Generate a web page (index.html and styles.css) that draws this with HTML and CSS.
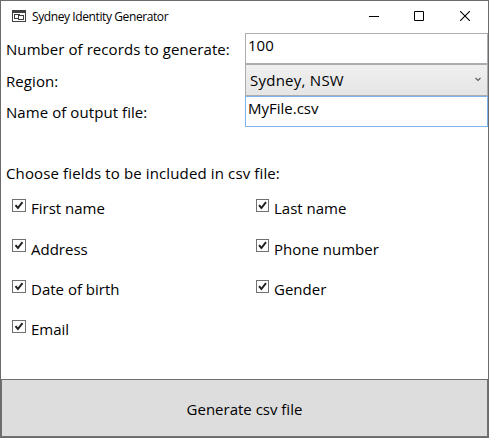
FILE: index.html
```
<!DOCTYPE html>
<html lang="en">
<head>
<meta charset="utf-8">
<title>Sydney Identity Generator</title>
<link rel="stylesheet" href="styles.css">
</head>
<body>
<div class="window">
  <header class="titlebar">
    <svg class="app-icon" width="14" height="12" viewBox="0 0 14 12" shape-rendering="crispEdges">
      <path fill="#404040" d="M0 0h14v12H0z"/>
      <path fill="#fff" d="M1 3h12v8H1z"/>
      <path fill="none" stroke="#404040" d="M2.5 4.500h5v4h-5z"/>
      <path fill="#fff" stroke="#404040" d="M6.500 5.500h5v4h-5z"/>
    </svg>
    <h1 class="title">Sydney Identity Generator</h1>
    <div class="controls">
      <svg class="minimize" width="10" height="10" viewBox="0 0 10 10"><path stroke="#000" d="M0 5.500h10"/></svg>
      <svg width="10" height="10" viewBox="0 0 10 10"><path fill="none" stroke="#000" d="M.5.5h9v9h-9z"/></svg>
      <svg width="10" height="10" viewBox="0 0 10 10"><path stroke="#000" stroke-width="1.100" d="M0 0l10 10M10 0L0 10"/></svg>
    </div>
  </header>
  <main class="form">
    <div class="settings">
      <label class="label">Number of records to generate:</label>
      <div class="field">100</div>
      <label class="label region">Region:</label>
      <div class="field select"><span>Sydney, NSW</span>
        <svg width="6" height="5" viewBox="0 0 6 5"><path fill="none" stroke="#606060" stroke-width="1.200" d="M.5 1L3 3.500 5.500 1"/></svg>
      </div>
      <label class="label">Name of output file:</label>
      <div class="field active">MyFile.csv</div>
    </div>
    <p class="prompt">Choose fields to be included in csv file:</p>
    <div class="choices">
      <div class="choice"><span class="box"><svg viewBox="0 0 11 11"><path d="M2 5.200L4.400 8 9 2.200"/></svg></span>First name</div>
      <div class="choice"><span class="box"><svg viewBox="0 0 11 11"><path d="M2 5.200L4.400 8 9 2.200"/></svg></span>Last name</div>
      <div class="choice"><span class="box"><svg viewBox="0 0 11 11"><path d="M2 5.200L4.400 8 9 2.200"/></svg></span><span class="lower">Address</span></div>
      <div class="choice"><span class="box"><svg viewBox="0 0 11 11"><path d="M2 5.200L4.400 8 9 2.200"/></svg></span><span class="lower">Phone number</span></div>
      <div class="choice"><span class="box"><svg viewBox="0 0 11 11"><path d="M2 5.200L4.400 8 9 2.200"/></svg></span>Date of birth</div>
      <div class="choice"><span class="box"><svg viewBox="0 0 11 11"><path d="M2 5.200L4.400 8 9 2.200"/></svg></span>Gender</div>
      <div class="choice"><span class="box"><svg viewBox="0 0 11 11"><path d="M2 5.200L4.400 8 9 2.200"/></svg></span>Email</div>
    </div>
  </main>
  <button class="generate">Generate csv file</button>
</div>
</body>
</html>
```
FILE: styles.css
```
* { box-sizing: border-box; }
body {
  margin: 0;
  font-family: "Open Sans", "Noto Sans", sans-serif;
  font-size: 15px;
  line-height: 20px;
  color: #000;
}
.window {
  display: flex;
  flex-direction: column;
  width: 489px;
  height: 438px;
  border: 1px solid #6b6b6b;
  background: #fff;
}
.titlebar {
  display: flex;
  align-items: center;
  height: 32px;
  flex: none;
  padding: 0 18px 0 11px;
}
.app-icon { margin: -2px 6px 0 0; }
.title {
  margin: 0;
  font-size: 12px;
  font-weight: 400;
  letter-spacing: -0.400px;
  line-height: 16px;
}
.controls { display: flex; gap: 36px; margin: -2px 0 0 auto; }
.minimize { margin-right: -1px; }
.controls svg, .app-icon { display: block; }
.form { flex: 1; }
.settings {
  display: grid;
  grid-template-columns: 244px 243px;
  grid-template-rows: 31px 32px 31px;
}
.label { padding: 6px 0 0 5px; letter-spacing: 0.070px; }
.region { padding-top: 7px; }
.field {
  border: 1px solid #abadb3;
  padding: 1px 2px 0;
}
.select {
  display: flex;
  align-items: center;
  justify-content: space-between;
  padding: 0 6px 1px 4px;
  border-color: #acacac;
  background: linear-gradient(#f0f0f0, #e5e5e5);
  letter-spacing: 0.250px;
}
.active { border-color: #7eb4ea; }
.prompt { margin: 36px 0 0 5px; letter-spacing: 0.130px; }
.choices {
  display: grid;
  grid-template-columns: 244px 243px;
  grid-auto-rows: 40.300px;
  margin-top: 15px;
}
.choice {
  display: flex;
  align-items: flex-start;
  gap: 5px;
  padding-left: 11px;
}
.choice:nth-child(even) .box { width: 13px; }
.choice:nth-child(even) .box svg { width: 11px; }
.lower { padding-top: 1px; }
.box {
  width: 14px;
  height: 13px;
  border: 1px solid #707070;
  margin-top: 1px;
}
.box svg { display: block; width: 12px; height: 11px; }
.box path { fill: none; stroke: #212121; stroke-width: 2; }
.generate {
  height: 58px;
  flex: none;
  padding: 1px 0 0;
  border: 1px solid #707070;
  background: #ddd;
  color: #000;
  font: inherit;
}
```
